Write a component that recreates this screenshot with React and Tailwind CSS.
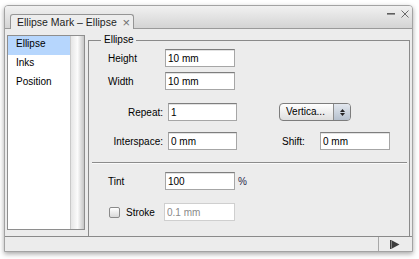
import React from "react";

const font = { fontFamily: '"Liberation Sans", Arial, sans-serif' };

const Field = ({ value, width = "w-[70px]", disabled = false }) => (
  <input
    type="text"
    readOnly
    defaultValue={value}
    className={
      disabled
        ? `${width} h-[18px] border border-[#cfcfcf] bg-white pl-[2px] text-[10px] leading-none text-[#8a8a8a] outline-none`
        : `${width} h-[18px] border border-[#a6a6a6] border-t-[#7e7e7e] bg-white pl-[2px] text-[10px] leading-none text-black outline-none shadow-[inset_0_1px_0_#e2e2e2]`
    }
  />
);

const App = () => {
  const items = ["Ellipse", "Inks", "Position"];

  return (
    <div className="w-[419px] h-[259px] bg-white pt-[5px] pl-[4px]" style={font}>
      <div className="w-[409px] h-[247px] flex flex-col border border-[#a3a3a3] rounded-t-[4px] bg-[#ececec] shadow-[0_2px_5px_rgba(0,0,0,0.35)] text-[10px] text-black">
        {/* title bar with the tab */}
        <div className="h-[23px] shrink-0 flex items-start border-b border-[#9a9a9a] rounded-t-[3px] bg-gradient-to-b from-[#f1f1f1] to-[#d4d4d4]">
          <div className="relative z-10 mt-[8px] ml-[5px] h-[15px] w-[124px] flex items-center pl-[6px] pr-[3px] border border-b-0 border-[#959595] rounded-t-[3px] bg-[#ededed]">
            <span className="text-[10.5px] leading-none text-[#1e1e1e] whitespace-nowrap">
              Ellipse Mark – Ellipse
            </span>
            <span className="ml-auto text-[13px] leading-none text-[#707070]">×</span>
          </div>
          <div className="ml-auto mr-[3px] mt-[4px] flex items-center gap-[6px]">
            <svg width="8" height="8" viewBox="0 0 8 8">
              <rect x="0" y="3" width="8" height="1.6" fill="#5e5e5e" />
            </svg>
            <svg width="8" height="8" viewBox="0 0 8 8">
              <path d="M0.5 0.5 L7.5 7.5 M7.5 0.5 L0.5 7.5" stroke="#6a6a6a" strokeWidth="1" />
            </svg>
          </div>
        </div>

        {/* body */}
        <div className="flex-1 flex items-start pl-[2px]">
          <div className="mt-[6px] w-[78px] h-[195px] flex border border-[#8e8e8e] bg-white">
            <div className="flex-1 flex flex-col">
              {items.map((it, i) => (
                <div
                  key={it}
                  className={`h-[19px] pl-[8px] pt-[2px] leading-[12px] ${i === 0 ? "bg-[#b6d6fd]" : ""}`}
                >
                  {it}
                </div>
              ))}
            </div>
            <div className="w-[14px] border-l border-[#c9c9c9] bg-gradient-to-r from-[#e6e6e6] via-[#fbfbfb] to-[#c6c6c6]" />
          </div>

          <fieldset className="ml-[3px] mt-[5px] h-[202px] w-[322px] border border-b-0 border-[#8a8a8a]">
            <legend className="ml-[12px] px-[3px] leading-[12px]">Ellipse</legend>

            <div className="mt-[3px] flex items-center pl-[19px]">
              <span className="w-[57px]">Height</span>
              <Field value="10 mm" />
            </div>
            <div className="mt-[5px] flex items-center pl-[19px]">
              <span className="w-[57px]">Width</span>
              <Field value="10 mm" />
            </div>

            <div className="mt-[13px] flex items-center">
              <span className="w-[79px] pr-[5px] text-right">Repeat:</span>
              <Field value="1" width="w-[69px]" />
              <div className="ml-[42px] w-[72px] h-[18px] flex items-stretch border border-[#7d7d7d] rounded-[4px] overflow-hidden bg-gradient-to-b from-white to-[#dedede]">
                <span className="flex-1 pl-[6px] flex items-center leading-none">Vertica...</span>
                <span className="w-[17px] flex flex-col items-center justify-center gap-[1px] border-l border-[#8c8c8c] bg-gradient-to-b from-[#e3e8ef] to-[#b5c0cd]">
                  <svg width="5" height="3" viewBox="0 0 5 3">
                    <path d="M2.5 0 L5 3 L0 3 Z" fill="#222" />
                  </svg>
                  <svg width="5" height="3" viewBox="0 0 5 3">
                    <path d="M0 0 L5 0 L2.5 3 Z" fill="#222" />
                  </svg>
                </span>
              </div>
            </div>

            <div className="mt-[11px] flex items-center">
              <span className="w-[79px] pr-[5px] text-right">Interspace:</span>
              <Field value="0 mm" width="w-[69px]" />
              <span className="ml-[45px] w-[38px]">Shift:</span>
              <Field value="0 mm" />
            </div>

            <div className="mt-[12px] ml-[3px] mr-[2px] h-px bg-[#8c8c8c] shadow-[0_1px_0_#fafafa]" />

            <div className="mt-[9px] flex items-center pl-[19px]">
              <span className="w-[57px]">Tint</span>
              <Field value="100" />
              <span className="ml-[3px] text-[#26264a]">%</span>
            </div>

            <div className="mt-[13px] flex items-center pl-[20px]">
              <span className="w-[11px] h-[11px] rounded-[2px] border border-[#8a8a8a] bg-gradient-to-b from-white to-[#d9d9d9]" />
              <span className="ml-[6px] w-[38px]">Stroke</span>
              <Field value="0.1 mm" width="w-[71px]" disabled />
            </div>
          </fieldset>
        </div>

        {/* bottom bar */}
        <div className="h-[15px] shrink-0 flex border-t border-[#8a8a8a]">
          <div className="ml-auto mr-[2px] w-[32px] flex items-center justify-center border-l border-[#a8a8a8]">
            <svg width="10" height="9" viewBox="0 0 10 9">
              <rect x="0" y="0" width="1.6" height="9" fill="#3c3c3c" />
              <path d="M2 0.5 L9.5 4.5 L2 8.5 Z" fill="#3c3c3c" />
            </svg>
          </div>
        </div>
      </div>
    </div>
  );
};

export default App;
